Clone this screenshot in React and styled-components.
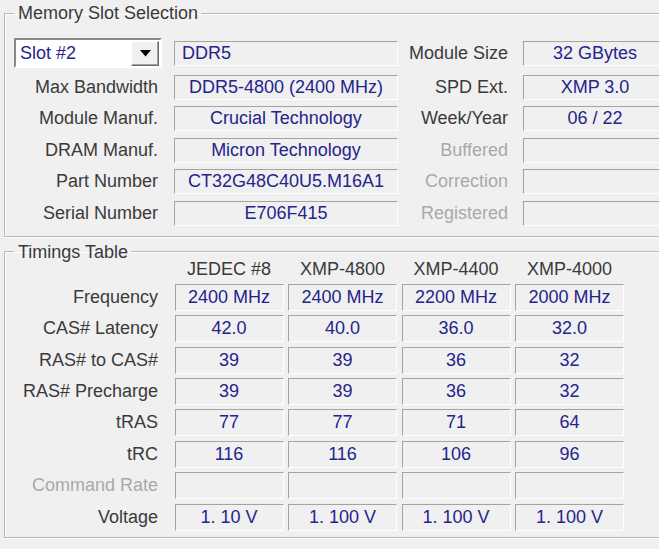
import React from 'react';
import styled, { createGlobalStyle } from 'styled-components';

const GlobalStyle = createGlobalStyle`
  html, body {
    margin: 0;
    padding: 0;
    background: #f0f0f0;
    overflow: hidden;
  }
  body {
    font-family: "Liberation Sans", Arial, sans-serif;
    font-size: 18px;
    color: #3a3a3a;
  }
`;

const Page = styled.div`
  width: 659px;
  height: 549px;
  padding-top: 8px;
  box-sizing: border-box;
`;

const Group = styled.fieldset`
  margin: ${(p) => p.$top || 0}px 0 0 4px;
  width: 700px;
  box-sizing: border-box;
  border: 1px solid #b8b8b8;
  box-shadow: inset 1px 1px 0 #fff, 0 1px 0 #fff;
  padding: ${(p) => p.$pad};
  min-width: 0;
`;

const Legend = styled.legend`
  line-height: 10px;
  padding: 0 3px 0 4px;
  color: #3a3a3a;
  white-space: nowrap;
`;

const SlotGrid = styled.div`
  display: grid;
  grid-template-columns: 160px 224px 125px 144px;
  grid-template-rows: 30px repeat(5, 25px);
  row-gap: 6.5px;
  align-items: center;
`;

const Label = styled.div`
  text-align: right;
  padding-right: ${(p) => p.$pr || 16}px;
  white-space: nowrap;
  color: ${(p) => (p.$off ? '#a9a9a9' : '#3a3a3a')};
  line-height: 25px;
`;

const Field = styled.div`
  height: ${(p) => p.$h || 25}px;
  box-sizing: border-box;
  border-top: 1px solid #a3a3a3;
  border-left: 1px solid #a3a3a3;
  border-bottom: 1px solid #fff;
  border-right: 1px solid #fff;
  background: #f0f0f0;
  color: #24248c;
  text-align: ${(p) => (p.$left ? 'left' : 'center')};
  padding-left: ${(p) => (p.$left ? 7 : 0)}px;
  line-height: ${(p) => (p.$h || 25) - 2}px;
  white-space: nowrap;
  overflow: hidden;
`;

const Combo = styled.div`
  width: 148px;
  height: 30px;
  box-sizing: border-box;
  border-top: 2px solid #8a8a8a;
  border-left: 2px solid #8a8a8a;
  border-bottom: 2px solid #fff;
  border-right: 2px solid #fff;
  background: #fff;
  display: flex;
  align-items: center;
  justify-content: space-between;
  padding: 0 1px 0 4px;
  color: #24248c;
`;

const DropButton = styled.div`
  width: 28px;
  height: 25px;
  box-sizing: border-box;
  background: #f0f0f0;
  border-top: 1px solid #fff;
  border-left: 1px solid #fff;
  border-bottom: 1px solid #6a6a6a;
  border-right: 1px solid #6a6a6a;
  box-shadow: inset -1px -1px 0 #a0a0a0;
  display: flex;
  align-items: center;
  justify-content: center;
`;

const TimingGrid = styled.div`
  display: grid;
  grid-template-columns: 156px repeat(4, 109px);
  column-gap: 4.5px;
  grid-template-rows: 18px repeat(8, 27px);
  row-gap: 4.4px;
  align-items: center;
`;

const Head = styled.div`
  text-align: center;
  line-height: 18px;
  white-space: nowrap;
  color: #3a3a3a;
  margin-bottom: 4px;
`;

const slotRows = [
  ['Max Bandwidth', 'DDR5-4800 (2400 MHz)', 'SPD Ext.', 'XMP 3.0', false],
  ['Module Manuf.', 'Crucial Technology', 'Week/Year', '06 / 22', false],
  ['DRAM Manuf.', 'Micron Technology', 'Buffered', '', true],
  ['Part Number', 'CT32G48C40U5.M16A1', 'Correction', '', true],
  ['Serial Number', 'E706F415', 'Registered', '', true],
];

const timings = [
  ['Frequency', ['2400 MHz', '2400 MHz', '2200 MHz', '2000 MHz']],
  ['CAS# Latency', ['42.0', '40.0', '36.0', '32.0']],
  ['RAS# to CAS#', ['39', '39', '36', '32']],
  ['RAS# Precharge', ['39', '39', '36', '32']],
  ['tRAS', ['77', '77', '71', '64']],
  ['tRC', ['116', '116', '106', '96']],
  ['Command Rate', ['', '', '', ''], true],
  ['Voltage', ['1. 10 V', '1. 100 V', '1. 100 V', '1. 100 V']],
];

const heads = ['JEDEC #8', 'XMP-4800', 'XMP-4400', 'XMP-4000'];

export default function App() {
  return (
    <Page>
      <GlobalStyle />
      <Group $pad="20px 0 10px 9px">
        <Legend>Memory Slot Selection</Legend>
        <SlotGrid>
          <Combo>
            <span>Slot #2</span>
            <DropButton>
              <svg width="11" height="7" viewBox="0 0 11 7">
                <path d="M0 0h11L5.5 6.5z" fill="#000" />
              </svg>
            </DropButton>
          </Combo>
          <Field $left>DDR5</Field>
          <Label $pr={15}>Module Size</Label>
          <Field>32 GBytes</Field>
          {slotRows.map(([l, v, l2, v2, off]) => (
            <React.Fragment key={l}>
              <Label>{l}</Label>
              <Field>{v}</Field>
              <Label $pr={15} $off={off}>{l2}</Label>
              <Field>{v2}</Field>
            </React.Fragment>
          ))}
        </SlotGrid>
      </Group>
      <Group $top={10} $pad="5px 0 6px 9px">
        <Legend>Timings Table</Legend>
        <TimingGrid>
          <div />
          {heads.map((h) => (
            <Head key={h}>{h}</Head>
          ))}
          {timings.map(([l, vals, off]) => (
            <React.Fragment key={l}>
              <Label $pr={12} $off={off}>{l}</Label>
              {vals.map((v, i) => (
                <Field key={i} $h={27}>{v}</Field>
              ))}
            </React.Fragment>
          ))}
        </TimingGrid>
      </Group>
    </Page>
  );
}
